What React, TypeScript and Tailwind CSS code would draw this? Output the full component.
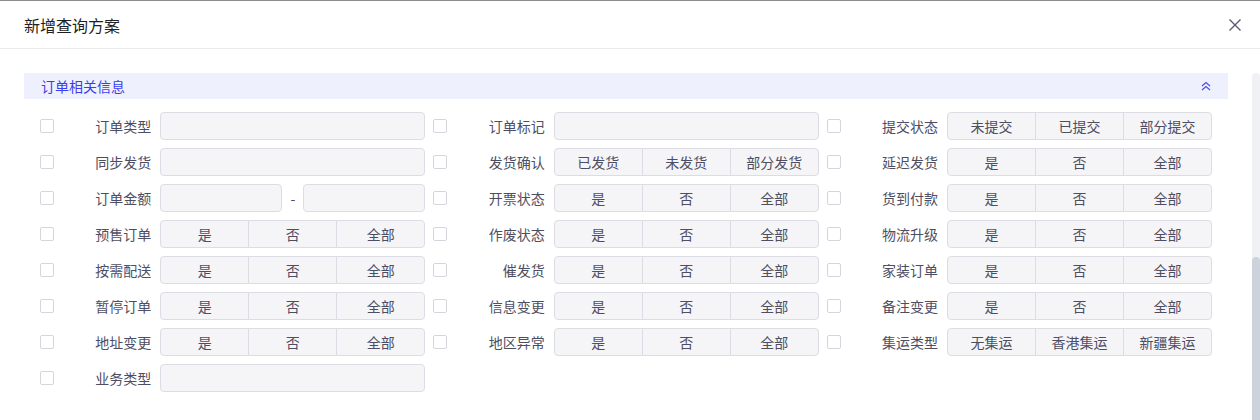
import React from "react";

type Field =
  | { label: string; kind: "input" }
  | { label: string; kind: "range" }
  | { label: string; kind: "seg"; options: string[] };

const YNA = ["是", "否", "全部"];

const fields: Field[] = [
  { label: "订单类型", kind: "input" },
  { label: "订单标记", kind: "input" },
  { label: "提交状态", kind: "seg", options: ["未提交", "已提交", "部分提交"] },
  { label: "同步发货", kind: "input" },
  { label: "发货确认", kind: "seg", options: ["已发货", "未发货", "部分发货"] },
  { label: "延迟发货", kind: "seg", options: YNA },
  { label: "订单金额", kind: "range" },
  { label: "开票状态", kind: "seg", options: YNA },
  { label: "货到付款", kind: "seg", options: YNA },
  { label: "预售订单", kind: "seg", options: YNA },
  { label: "作废状态", kind: "seg", options: YNA },
  { label: "物流升级", kind: "seg", options: YNA },
  { label: "按需配送", kind: "seg", options: YNA },
  { label: "催发货", kind: "seg", options: YNA },
  { label: "家装订单", kind: "seg", options: YNA },
  { label: "暂停订单", kind: "seg", options: YNA },
  { label: "信息变更", kind: "seg", options: YNA },
  { label: "备注变更", kind: "seg", options: YNA },
  { label: "地址变更", kind: "seg", options: YNA },
  { label: "地区异常", kind: "seg", options: YNA },
  { label: "集运类型", kind: "seg", options: ["无集运", "香港集运", "新疆集运"] },
  { label: "业务类型", kind: "input" },
];

function Control({ f }: { f: Field }) {
  if (f.kind === "input") {
    return <div className="w-[265px] h-7 rounded-[4px] border border-[#dcdce5] bg-[#f5f5f8]" />;
  }
  if (f.kind === "range") {
    return (
      <div className="w-[265px] h-7 flex items-center">
        <div className="w-[122px] h-7 rounded-[4px] border border-[#dcdce5] bg-[#f5f5f8]" />
        <div className="flex-1 text-center text-[#4e4e62]">-</div>
        <div className="w-[122px] h-7 rounded-[4px] border border-[#dcdce5] bg-[#f5f5f8]" />
      </div>
    );
  }
  return (
    <div className="w-[265px] h-7 flex rounded-[4px] border border-[#dcdce5] bg-[#f5f5f8] overflow-hidden">
      {f.options.map((o, i) => (
        <div
          key={o}
          className={
            "flex-1 flex items-center justify-center text-[#4e4e62] " +
            (i > 0 ? "border-l border-[#dcdce5]" : "")
          }
        >
          {o}
        </div>
      ))}
    </div>
  );
}

export default function App() {
  return (
    <div
      className="w-[1260px] h-[420px] bg-white border-t border-[#8c8c90] overflow-hidden relative text-[14px]"
      style={{ fontFamily: '"Noto Sans CJK SC", "Noto Sans", sans-serif' }}
    >
      <div className="h-[48px] border-b border-[#ebebef] flex items-center justify-between pl-6 pr-[18px]">
        <span className="text-[16px] text-[#1f1f24]">新增查询方案</span>
        <svg width="14" height="14" viewBox="0 0 14 14" className="text-[#5a5a6e]">
          <path d="M1.5 1.5 L12.5 12.5 M12.5 1.5 L1.5 12.5" stroke="currentColor" strokeWidth="1.4" fill="none" />
        </svg>
      </div>

      <div className="flex">
        <div className="w-[1252px] pt-6">
          <div className="ml-6 w-[1204px] h-[26px] bg-[#eef0fd] flex items-center justify-between pl-[17px] pr-[16px]">
            <span className="text-[#3d3df0]">订单相关信息</span>
            <svg width="12" height="12" viewBox="0 0 12 12" className="text-[#5050e6]">
              <path d="M2 6 L6 2.5 L10 6 M2 10 L6 6.5 L10 10" stroke="currentColor" strokeWidth="1.3" fill="none" />
            </svg>
          </div>

          <div className="ml-10 w-[1180px] grid grid-cols-3 gap-y-2 mt-[13px]">
            {fields.map((f) => (
              <div key={f.label} className="flex items-center h-7">
                <div className="w-3.5 h-3.5 rounded-[2px] border border-[#d5d5dd] bg-white shrink-0" />
                <div className="flex-1 text-right pr-[9px] text-[#4e4e62]">{f.label}</div>
                <Control f={f} />
                <div className="w-2 shrink-0" />
              </div>
            ))}
          </div>
        </div>

        <div className="w-2 mt-6 h-[400px] rounded-t-full bg-[#f0f1f5] flex flex-col">
          <div className="mt-[184px] flex-1 rounded-t-full bg-[#ced3db]" />
        </div>
      </div>
    </div>
  );
}
